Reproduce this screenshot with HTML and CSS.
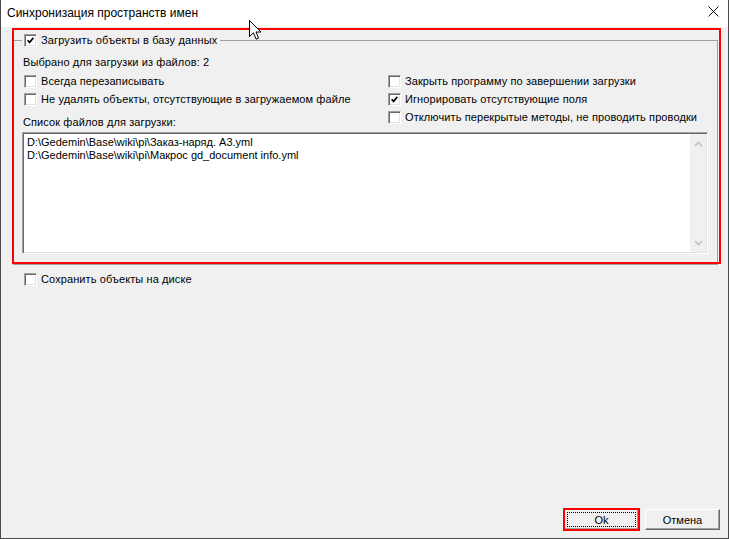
FILE: index.html
```html
<!DOCTYPE html>
<html lang="ru">
<head>
    <meta charset="UTF-8">
    <title>Синхронизация пространств имен</title>
    <link rel="stylesheet" href="styles.css">
</head>
<body>

    <div class="window">
        <!-- Заголовок окна -->
        <div class="titlebar">
            <span class="title">Синхронизация пространств имен</span>
            <span class="close">
                <svg width="11" height="11" viewBox="0 0 11 11"><path d="M0.5 0.5 L10.5 10.5 M10.5 0.5 L0.5 10.5" stroke="#111" stroke-width="1" fill="none"/></svg>
            </span>
        </div>

        <div class="client">
            <fieldset class="group">
                <legend class="check">
                    <span class="box checked"><svg width="7" height="7" viewBox="0 0 7 7"><path d="M0.6 3.2 L2.6 5.4 L6.4 0.9" stroke="#000" stroke-width="1.7" fill="none"/></svg></span>
                    Загрузить объекты в базу данных
                </legend>

                <div class="options">
                    <div class="col">
                        <div class="row text">Выбрано для загрузки из файлов: 2</div>
                        <div class="row check first"><span class="box"></span>Всегда перезаписывать</div>
                        <div class="row check"><span class="box"></span>Не удалять объекты, отсутствующие в загружаемом файле</div>
                        <div class="row text caption">Список файлов для загрузки:</div>
                    </div>
                    <div class="col col-right">
                        <div class="row check"><span class="box"></span>Закрыть программу по завершении загрузки</div>
                        <div class="row check"><span class="box checked"><svg width="7" height="7" viewBox="0 0 7 7"><path d="M0.6 3.2 L2.6 5.4 L6.4 0.9" stroke="#000" stroke-width="1.7" fill="none"/></svg></span>Игнорировать отсутствующие поля</div>
                        <div class="row check"><span class="box"></span>Отключить перекрытые методы, не проводить проводки</div>
                    </div>
                </div>

                <!-- Список файлов -->
                <div class="memo">
                    <div class="memo-lines">
                        <div>D:\Gedemin\Base\wiki\pi\Заказ-наряд. А3.yml</div>
                        <div>D:\Gedemin\Base\wiki\pi\Макрос gd_document info.yml</div>
                    </div>
                    <div class="scrollbar">
                        <svg width="9" height="6" viewBox="0 0 9 6"><path d="M1 5 L4.5 1.5 L8 5" stroke="#c2c2c2" stroke-width="1.6" fill="none"/></svg>
                        <svg width="9" height="6" viewBox="0 0 9 6"><path d="M1 1 L4.5 4.5 L8 1" stroke="#c2c2c2" stroke-width="1.6" fill="none"/></svg>
                    </div>
                </div>
            </fieldset>

            <div class="row check save"><span class="box"></span>Сохранить объекты на диске</div>

            <div class="buttons">
                <button class="btn btn-default"><span class="focus">Ok</span></button>
                <button class="btn">Отмена</button>
            </div>
        </div>

        <!-- Красная рамка поверх группы -->
        <div class="highlight"></div>

        <!-- Курсор мыши -->
        <svg class="cursor" width="13" height="21" viewBox="0 0 13 21">
            <path d="M0.5 0.5 L0.5 16.5 L4.5 12.8 L7.2 19.2 L9.6 18.2 L7 12 L12 12 Z" fill="#fff" stroke="#000" stroke-width="1" stroke-linejoin="miter"/>
        </svg>
    </div>

</body>
</html>
```

FILE: styles.css
```css
body {
    margin: 0;
    padding: 0;
    background: #f0f0f0;
    font-family: 'Liberation Sans', Arial, sans-serif;
    font-size: 11px;
    color: #000;
    overflow: hidden;
}

.window {
    position: relative;
    width: 729px;
    height: 539px;
    box-sizing: border-box;
    border: 1px solid #4a4a4a;
    border-top: none;
    background: #f0f0f0;
    display: flex;
    flex-direction: column;
}

.titlebar {
    height: 27px;
    background: #fff;
    display: flex;
    align-items: center;
    justify-content: space-between;
    flex-shrink: 0;
}

.title {
    padding-left: 6px;
    font-size: 12px;
    line-height: 16px;
    margin-top: -1px;
}

.close {
    display: flex;
    margin-right: 9px;
    margin-top: -4px;
}

.client {
    flex: 1;
    display: flex;
    flex-direction: column;
}

/* Группа "Загрузить объекты" */
.group {
    margin: 7px 10px 0 12px;
    padding: 6px 9px 10px 8px;
    border: 1px solid #a0a0a0;
    border-radius: 0;
    min-width: 0;
}

.group legend {
    padding: 0 3px 0 2px;
    height: 13px;
    line-height: 13px;
    letter-spacing: 0.15px;
}

.check {
    display: flex;
    align-items: center;
    gap: 4px;
}

.box {
    width: 13px;
    height: 13px;
    box-sizing: border-box;
    background: #fff;
    border: 1px solid;
    border-color: #a0a0a0 #fff #fff #a0a0a0;
    box-shadow: inset 1px 1px 0 #696969, inset -1px -1px 0 #e3e3e3;
    display: flex;
    align-items: center;
    justify-content: center;
    flex-shrink: 0;
}

.options {
    display: grid;
    grid-template-columns: 364px 1fr;
}

.col {
    display: flex;
    flex-direction: column;
}

.col-right {
    padding-top: 19px;
}

.row {
    height: 18px;
    display: flex;
    align-items: center;
    white-space: nowrap;
    letter-spacing: 0.1px;
}

.row.text {
    padding-left: 1px;
}

.row.check {
    padding-left: 2px;
}

.row.first {
    margin-top: 1px;
}

.row.caption {
    margin-top: 5px;
}

.memo {
    margin-top: 1px;
    height: 122px;
    box-sizing: border-box;
    background: #fff;
    border: 1px solid;
    border-color: #a0a0a0 #fff #fff #a0a0a0;
    box-shadow: inset 1px 1px 0 #696969, inset -1px -1px 0 #e3e3e3;
    padding: 1px;
    display: flex;
}

.memo-lines {
    flex: 1;
    padding: 2px 3px;
    line-height: 13px;
}

.scrollbar {
    width: 16px;
    background: #f0f0f0;
    display: flex;
    flex-direction: column;
    justify-content: space-between;
    align-items: center;
    padding: 7px 0 6px;
}

.row.save {
    margin-top: 5px;
    padding-left: 23px;
}

.buttons {
    margin: auto 8px 8px 0;
    display: flex;
    justify-content: flex-end;
    gap: 6px;
}

.btn {
    width: 75px;
    height: 21px;
    box-sizing: border-box;
    padding: 0;
    margin: 0;
    font-family: 'Liberation Sans', Arial, sans-serif;
    font-size: 11px;
    color: #000;
    background: #f0f0f0;
    border: 1px solid;
    border-color: #fff #696969 #696969 #fff;
    box-shadow: inset -1px -1px 0 #a0a0a0;
    display: flex;
    align-items: center;
    justify-content: center;
}

.btn-default {
    outline: 2px solid #ff0000;
    outline-offset: -1px;
    padding: 2px;
}

.btn-default .focus {
    flex: 1;
    align-self: stretch;
    border: 1px dotted #000;
    display: flex;
    align-items: center;
    justify-content: center;
}

.highlight {
    position: absolute;
    left: 11px;
    top: 28px;
    width: 709px;
    height: 236px;
    box-sizing: border-box;
    border: 2px solid #ff0000;
    pointer-events: none;
}

.cursor {
    position: absolute;
    left: 248px;
    top: 20px;
}
```
